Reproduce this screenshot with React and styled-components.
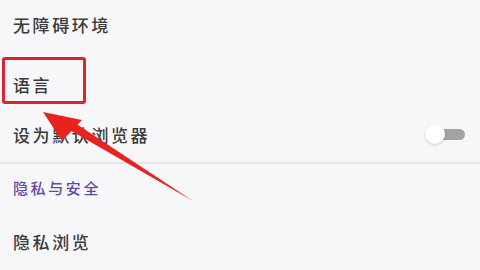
import React from "react";
import styled, { createGlobalStyle } from "styled-components";

const Global = createGlobalStyle`
  html, body { margin: 0; padding: 0; background: #f7f7f9; }
  body { font-family: "Noto Sans CJK SC", "Noto Sans", sans-serif; }
`;

const Page = styled.div`
  position: relative;
  width: 480px;
  height: 270px;
  overflow: hidden;
  background: #f7f7f9;
`;

const Row = styled.div`
  position: relative;
  height: ${(p) => p.$h}px;
  display: flex;
  align-items: center;
  justify-content: space-between;
  padding: 0 15px 0 13px;
  box-sizing: border-box;
`;

const Label = styled.span`
  font-size: 17px;
  font-weight: 500;
  color: #3a3a3a;
  letter-spacing: 2.6px;
`;

const Section = styled.span`
  font-size: 15px;
  font-weight: 500;
  color: #6248a8;
  letter-spacing: 2.6px;
`;

const Divider = styled.div`
  height: 2px;
  background: #e6e6ea;
  margin-top: 14px;
`;

const Toggle = styled.div`
  position: relative;
  width: 40px;
  height: 16px;
`;

const Track = styled.div`
  position: absolute;
  right: 0;
  top: 3px;
  width: 30px;
  height: 11px;
  border-radius: 6px;
  background: #a3a3a6;
`;

const Knob = styled.div`
  position: absolute;
  left: 0;
  top: -2px;
  width: 20px;
  height: 20px;
  border-radius: 50%;
  background: #ffffff;
  box-shadow: 0 1px 3px rgba(0, 0, 0, 0.18);
`;

const Highlight = styled.div`
  position: absolute;
  left: 2px;
  top: 9px;
  width: 84px;
  height: 47px;
  box-sizing: border-box;
  border: 3px solid #d8262a;
  border-radius: 3px;
`;

const Arrow = styled.svg`
  position: absolute;
  left: 0;
  top: 0;
  pointer-events: none;
`;

export default function App() {
  return (
    <Page>
      <Global />
      <Row $h={48}>
        <Label>无障碍环境</Label>
      </Row>
      <Row $h={72}>
        <Label>语言</Label>
        <Highlight />
      </Row>
      <Row $h={28}>
        <Label>设为默认浏览器</Label>
        <Toggle>
          <Track />
          <Knob />
        </Toggle>
      </Row>
      <Divider />
      <Row $h={47}>
        <Section>隐私与安全</Section>
      </Row>
      <Row $h={60}>
        <Label>隐私浏览</Label>
      </Row>
      <Arrow width="480" height="270" viewBox="0 0 480 270">
        <path d="M193 201 L68 129 L72 121 Z" fill="#e8231f" />
        <path d="M43 112 L82 120 L62 141 Z" fill="#e8231f" />
      </Arrow>
    </Page>
  );
}
